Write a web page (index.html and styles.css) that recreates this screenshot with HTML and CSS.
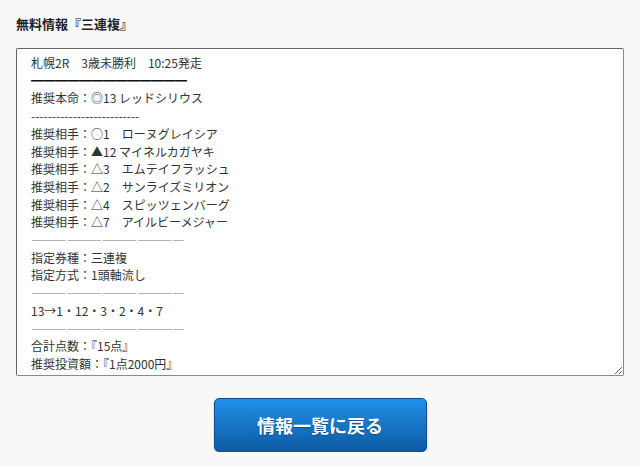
FILE: index.html
```html
<!DOCTYPE html>
<html lang="ja">
<head>
  <meta charset="UTF-8" />
  <title>無料情報</title>
  <link rel="stylesheet" href="styles.css">
</head>
<body>
  <div class="info-container">
    <h2 class="info-title">無料情報『三連複』</h2>
    <div class="info-text">札幌2R　3歳未勝利　10:25発走
<span class="rule-bold">━━━━━━━━━━━━━</span>
推奨本命：◎13 レッドシリウス
--------------------------
推奨相手：○1　ローヌグレイシア
推奨相手：▲12 マイネルカガヤキ
推奨相手：△3　エムテイフラッシュ
推奨相手：△2　サンライズミリオン
推奨相手：△4　スピッツェンバーグ
推奨相手：△7　アイルビーメジャー
<span class="rule">⸻⸻⸻⸻―</span>
指定券種：三連複
指定方式：1頭軸流し
<span class="rule">⸻⸻⸻⸻―</span>
13→1・12・3・2・4・7
<span class="rule">⸻⸻⸻⸻―</span>
合計点数：『15点』
推奨投資額：『1点2000円』</div>
    <div class="info-actions">
      <a class="back-btn" href="#">情報一覧に戻る</a>
    </div>
  </div>
</body>
</html>
```

FILE: styles.css
```css
body {
  font-family: 'Noto Sans CJK JP', 'Noto Sans', sans-serif;
  background-color: #f8f8f8;
  color: #222222;
  margin: 0;
  padding: 14px 16px 0;
}
.info-title {
  font-size: 13px;
  font-weight: bold;
  line-height: 20px;
  margin: 0 0 14px;
}
.info-text {
  box-sizing: border-box;
  height: 328px;
  padding: 5px 14px;
  font-size: 12px;
  line-height: 17.7px;
  color: #333333;
  white-space: pre-wrap;
  background-color: #ffffff;
  border: 1px solid #8a8a8a;
  border-top-color: #666;
  border-left-color: #666;
  border-radius: 2px;
  overflow: hidden;
  resize: both;
}
.rule-bold {
  color: #111111;
}
.rule {
  font-size: 11.8px;
  color: #777777;
}
.info-actions {
  display: flex;
  justify-content: center;
  margin-top: 22px;
}
.back-btn {
  display: flex;
  align-items: center;
  justify-content: center;
  width: 213px;
  height: 54px;
  box-sizing: border-box;
  color: #ffffff;
  font-size: 18px;
  font-weight: bold;
  text-decoration: none;
  text-shadow: 0 1px 1px rgba(0, 0, 0, 0.3);
  background: linear-gradient(to bottom, #2190ea, #0d5aa3);
  border: 1px solid #0b4f92;
  border-radius: 5px;
  box-shadow: 0 1px 2px rgba(0, 0, 0, 0.25);
}
```
